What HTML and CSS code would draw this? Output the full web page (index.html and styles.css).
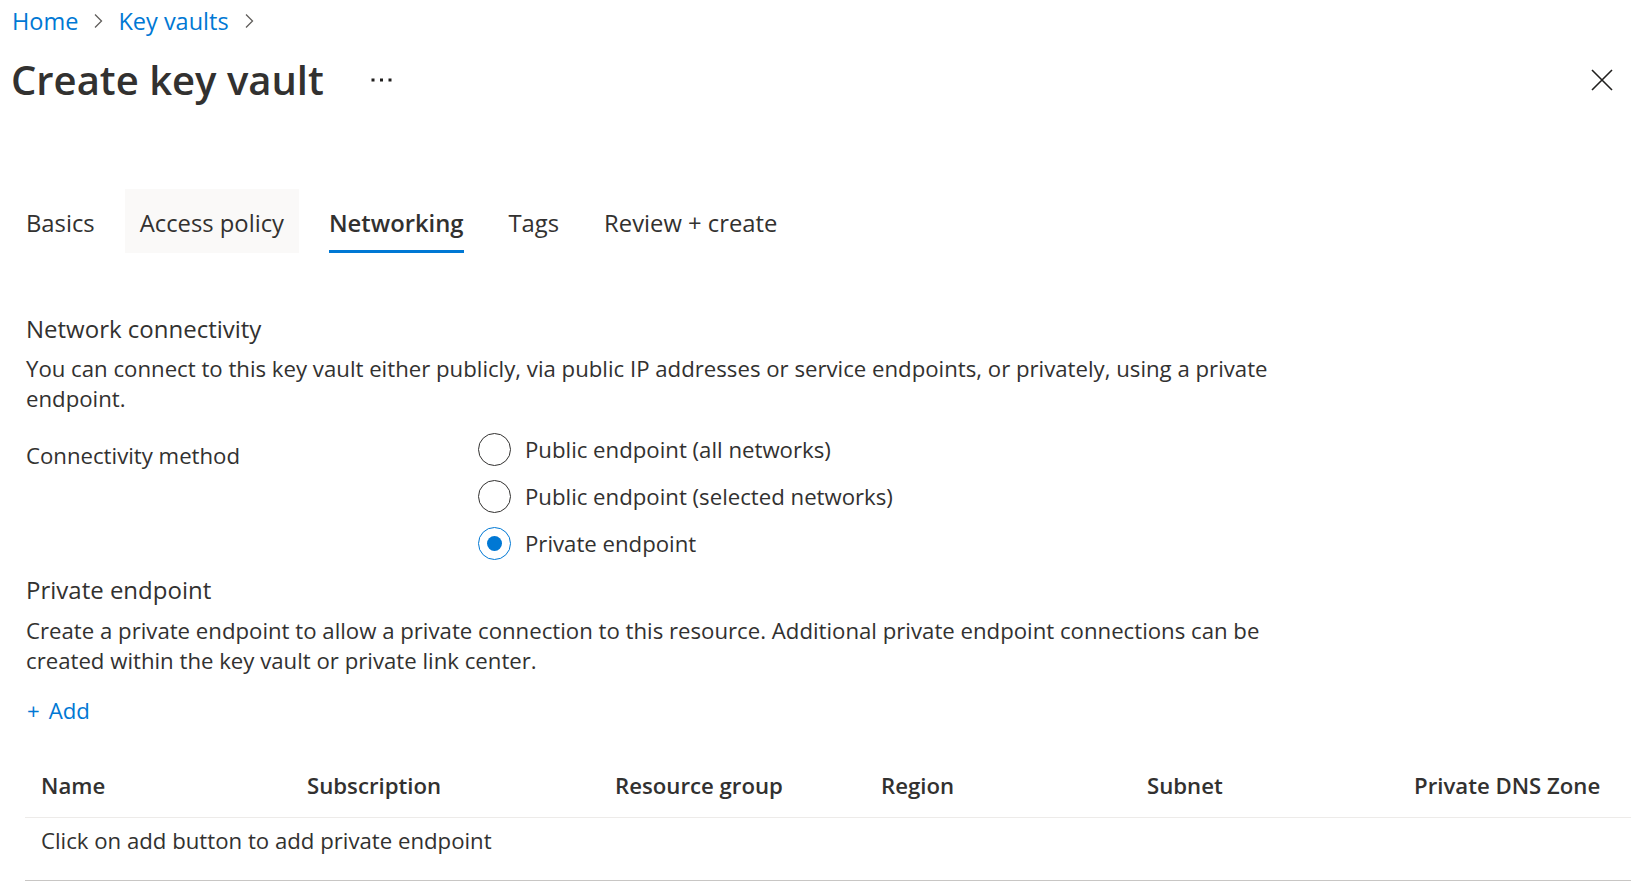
FILE: index.html
```html
<!DOCTYPE html>
<html lang="en">
<head>
<meta charset="utf-8">
<title>Create key vault</title>
<link rel="stylesheet" href="styles.css">
</head>
<body>
<nav class="breadcrumb">
  <a class="crumb" href="#">Home</a>
  <svg class="chev" width="10" height="16" viewBox="0 0 10 16"><path d="M2 1.5 L8.5 8 L2 14.5" fill="none" stroke="#605e5c" stroke-width="1.3"/></svg>
  <a class="crumb" href="#">Key vaults</a>
  <svg class="chev" width="10" height="16" viewBox="0 0 10 16"><path d="M2 1.5 L8.5 8 L2 14.5" fill="none" stroke="#605e5c" stroke-width="1.3"/></svg>
</nav>
<header class="title-row">
  <h1 class="title">Create key vault</h1>
  <button class="more" aria-label="More">
    <svg width="22" height="6" viewBox="0 0 22 6"><rect x="1.5" y="1.5" width="3" height="3" fill="#201f1e"/><rect x="10" y="1.5" width="3" height="3" fill="#201f1e"/><rect x="18.5" y="1.5" width="3" height="3" fill="#201f1e"/></svg>
  </button>
  <button class="close" aria-label="Close">
    <svg width="22" height="22" viewBox="0 0 22 22"><path d="M1 1 L21 21 M21 1 L1 21" stroke="#201f1e" stroke-width="1.6" fill="none"/></svg>
  </button>
</header>
<div class="tabs">
  <div class="tab">Basics</div>
  <div class="tab hover">Access policy</div>
  <div class="tab active">Networking</div>
  <div class="tab">Tags</div>
  <div class="tab">Review + create</div>
</div>
<main class="content">
  <h2 class="section-title">Network connectivity</h2>
  <p class="desc">You can connect to this key vault either publicly, via public IP addresses or service endpoints, or privately, using a private endpoint.</p>
  <div class="form-row">
    <div class="form-label">Connectivity method</div>
    <div class="radios">
      <label class="radio"><span class="circle"></span><span>Public endpoint (all networks)</span></label>
      <label class="radio"><span class="circle"></span><span>Public endpoint (selected networks)</span></label>
      <label class="radio checked"><span class="circle"></span><span>Private endpoint</span></label>
    </div>
  </div>
  <h2 class="section-title second">Private endpoint</h2>
  <p class="desc second">Create a private endpoint to allow a private connection to this resource. Additional private endpoint connections can be created within the key vault or private link center.</p>
  <a class="add" href="#"><span class="plus">+</span>Add</a>
  <div class="grid">
    <div class="grid-head">
      <div class="cell">Name</div>
      <div class="cell">Subscription</div>
      <div class="cell">Resource group</div>
      <div class="cell">Region</div>
      <div class="cell">Subnet</div>
      <div class="cell">Private DNS Zone</div>
    </div>
    <div class="grid-row">Click on add button to add private endpoint</div>
  </div>
</main>
</body>
</html>
```
FILE: styles.css
```css
* { box-sizing: border-box; }
html, body { margin: 0; padding: 0; background: #ffffff; }
body {
  font-family: "Open Sans", "Noto Sans", sans-serif;
  color: #323130;
  width: 1648px;
  height: 896px;
  overflow: hidden;
}
.breadcrumb {
  height: 42px;
  display: flex;
  align-items: center;
  padding-left: 12px;
  font-size: 23.5px;
}
.crumb { color: #0078d4; text-decoration: none; line-height: 42px; }
.chev { margin: 0 15px; flex: none; }
.title-row {
  height: 76px;
  display: flex;
  align-items: center;
  padding-left: 11px;
  padding-right: 35px;
}
.title {
  margin: 0;
  font-size: 40px;
  font-weight: 600;
  line-height: 50px;
}
.more {
  border: 0; background: none; padding: 0; margin-left: 46px;
  display: flex; align-items: center;
}
.close {
  margin-left: auto;
  border: 0; background: none; padding: 0;
  display: flex;
}
.tabs {
  margin-top: 71px;
  height: 64px;
  display: flex;
  padding-left: 11px;
  gap: 15px;
  font-size: 23.8px;
}
.tab {
  position: relative;
  padding: 4px 15px 0;
  line-height: 60px;
  white-space: nowrap;
}
.tab.hover { background: #faf9f8; }
.tab.active { font-weight: 600; }
.tab.active::after {
  content: "";
  position: absolute;
  left: 15px; right: 15px; bottom: 0;
  height: 3px;
  background: #0078d4;
}
.content {
  padding: 0 17px 0 26px;
}
.section-title {
  margin: 60px 0 0;
  font-size: 24px;
  font-weight: 400;
  line-height: 32px;
}
.section-title.second { margin-top: 7px; }
.desc {
  margin: 9px 0 0;
  font-size: 22.2px;
  line-height: 30px;
  max-width: 1275px;
}
.desc.second { margin-top: 10px; }
.form-row {
  display: flex;
  margin-top: 12px;
}
.form-label {
  width: 452px;
  flex: none;
  font-size: 22.2px;
  line-height: 30px;
  padding-top: 15px;
}
.radios { display: flex; flex-direction: column; }
.radio {
  display: flex;
  align-items: center;
  height: 47px;
  font-size: 22.2px;
}
.circle {
  width: 33px; height: 33px;
  border-radius: 50%;
  border: 1.5px solid #323130;
  margin-right: 14px;
  flex: none;
  display: flex; align-items: center; justify-content: center;
}
.radio.checked .circle { border: 1.5px solid #0078d4; }
.radio.checked .circle::after {
  content: "";
  width: 15px; height: 15px; border-radius: 50%;
  background: #0078d4;
}
.add {
  display: inline-block;
  margin-top: 20px;
  color: #0078d4;
  text-decoration: none;
  font-size: 22.2px;
  line-height: 30px;
}
.plus { margin: 0 9px 0 1px; }
.grid { margin: 25px 0 0 -1px; font-size: 22.2px; }
.grid-head {
  display: grid;
  grid-template-columns: 266px 308px 266px 266px 267px 1fr;
  height: 67px;
  padding-top: 2px;
  align-items: center;
  border-bottom: 1px solid #edebe9;
  font-weight: 600;
}
.cell { padding-left: 16px; white-space: nowrap; }
.grid-row {
  padding: 8px 0 24px 16px;
  line-height: 30px;
  border-bottom: 1.5px solid #c8c6c4;
}
```
